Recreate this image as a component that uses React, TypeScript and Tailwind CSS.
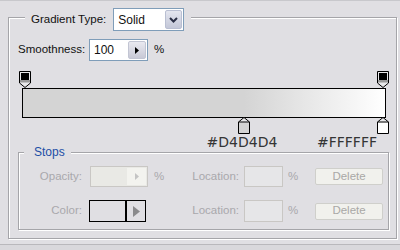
import * as React from "react";

type Stop = { pos: number; color: string; label?: string };

const opacityStops: Stop[] = [
    { pos: 0, color: "#000000" },
    { pos: 1, color: "#000000" },
];

const colorStops: Stop[] = [
    { pos: 0.612, color: "#d4d4d4", label: "#D4D4D4" },
    { pos: 1, color: "#ffffff", label: "#FFFFFF" },
];

// bar inner spans 358px, stop tip sits 2.5px in from the bar edge
function stopLeft(pos: number) {
    return Math.round(2.5 + pos * 358 - 6);
}

const etched = "border border-[#a5a5a9] shadow-[inset_1px_1px_0_#ffffff,1px_1px_0_#ffffff]";

function TopStop() {
    return (
        <svg width="12" height="17" viewBox="0 0 12 17">
            <path d="M0.5 0.5 H11.5 V12 L6 16.5 L0.5 12 Z" fill="#e8e8ea" stroke="#000" />
            <rect x="2" y="2" width="8" height="7" fill="#000" />
            <rect x="1" y="9" width="10" height="2.5" fill="#9a9a9a" />
        </svg>
    );
}

function BottomStop({ color }: { color: string }) {
    return (
        <svg width="12" height="17" viewBox="0 0 12 17">
            <path d="M6 0.5 L11.5 5 V16.5 H0.5 V5 Z" fill="#e8e8ea" stroke="#000" />
            <rect x="1" y="5.5" width="10" height="10.5" fill={color} />
            <path d="M0.5 5 H11.5" stroke="#000" />
        </svg>
    );
}

function SmallArrow({ fill }: { fill: string }) {
    return (
        <svg width="4" height="7" viewBox="0 0 4 7">
            <path d="M0 0 L4 3.5 L0 7 Z" fill={fill} />
        </svg>
    );
}

function GradientEditor() {
    return (
        <div className="relative ml-[13px] mt-[10px] h-[79px] w-[364px] pt-[17px]">
            <div className="h-[30px] border border-black bg-[linear-gradient(to_right,#d4d4d4_61%,#ffffff)]" />

            {opacityStops.map((s, i) => (
                <div key={"o" + i} className="absolute top-0 flex" style={{ left: stopLeft(s.pos) }}>
                    <TopStop />
                </div>
            ))}

            {colorStops.map((s, i) => (
                <div key={"c" + i} className="absolute top-[46px] flex" style={{ left: stopLeft(s.pos) }}>
                    <BottomStop color={s.color} />
                </div>
            ))}

            {/* hex readouts */}
            <div
                className="absolute top-[63px] w-[80px] text-center font-['DejaVu_Sans',sans-serif] text-[14px] leading-[16px] text-[#353535]"
                style={{ left: stopLeft(colorStops[0].pos) + 6 - 42 }}
            >
                {colorStops[0].label}
            </div>
            <div className="absolute right-[9px] top-[63px] font-['DejaVu_Sans',sans-serif] text-[14px] leading-[16px] text-[#353535]">
                {colorStops[1].label}
            </div>
        </div>
    );
}

function DisabledRowEnd() {
    return (
        <>
            <span className="w-[50px] text-right">Location:</span>
            <div className="ml-[5px] h-full w-[39px] border border-[#c9c7c4] bg-[#e6e6e8]" />
            <span className="ml-[5px]">%</span>
            <button
                type="button"
                disabled
                className="ml-auto flex h-[17px] w-[68px] items-center justify-center rounded-[2px] border border-[#cfcfcb] bg-[#f1f1ed] text-[#a9a8a6]"
            >
                Delete
            </button>
        </>
    );
}

export default function App() {
    return (
        <div className="relative flex h-[250px] w-[400px] flex-col overflow-hidden border-t border-[#c8c8cc] bg-[#e0dfe3] font-['Liberation_Sans',Arial,sans-serif] text-[11.5px] text-[#111]">
            {/* Main group box */}
            <div className={["ml-[8px] mt-[16px] box-border h-[222px] w-[389px] shrink-0", etched].join(" ")}>
                {/* Legend: Gradient Type */}
                <div className="ml-[16px] mt-[-10px] flex h-[23px] w-fit items-center bg-[#e0dfe3] pl-[6px] pr-[7px]">
                    <span>Gradient Type:</span>
                    <div className="ml-[7px] flex h-[23px] w-[71px] border border-[#7f9db9] bg-white p-[1px]">
                        <span className="flex flex-1 items-center pl-[3px] text-[12px]">Solid</span>
                        <span className="flex w-[17px] items-center justify-center rounded-[2px] border border-[#b9bfd2] bg-[linear-gradient(#e4e6ef,#c3c7d8)]">
                            <svg width="9" height="6" viewBox="0 0 9 6">
                                <path d="M1 1 L4.5 4.5 L8 1" fill="none" stroke="#2a2f45" strokeWidth="2" />
                            </svg>
                        </span>
                    </div>
                </div>

                {/* Smoothness */}
                <div className="mt-[8px] flex h-[22px] items-center pl-[9px]">
                    <span className="w-[71px]">Smoothness:</span>
                    <div className="flex h-[22px] w-[59px] border border-[#7f9db9] bg-white p-[1px]">
                        <span className="flex flex-1 items-center pl-[3px] text-[12px]">100</span>
                        <span className="flex w-[18px] items-center justify-center rounded-[2px] border border-[#c2c5d3] bg-[linear-gradient(#e9e9f0,#c8c9d6)]">
                            <SmallArrow fill="#000" />
                        </span>
                    </div>
                    <span className="ml-[6px]">%</span>
                </div>

                <GradientEditor />

                {/* Stops group */}
                <div className={["ml-[9px] mt-[2px] box-border h-[78px] w-[371px]", etched].join(" ")}>
                    <div className="ml-[5px] mt-[-8px] h-[14px] w-fit bg-[#e0dfe3] pl-[10px] pr-[6px] leading-[14px] text-[12px] text-[#1d4ea6]">
                        Stops
                    </div>

                    <div className="mt-[7px] flex h-[21px] items-center pr-[5px] text-[#a9a8ac]">
                        <div className="flex h-full w-[170px] items-center">
                            <span className="w-[63px] text-right">Opacity:</span>
                            <div className="ml-[8px] flex h-full w-[58px] border border-[#c9c7c4] bg-[#e9e9e5] p-[1px]">
                                <span className="flex-1" />
                                <span className="flex w-[19px] items-center justify-center bg-[#f3f3ef]">
                                    <SmallArrow fill="#c4c4c4" />
                                </span>
                            </div>
                            <span className="ml-[6px]">%</span>
                        </div>
                        <DisabledRowEnd />
                    </div>

                    <div className="mt-[13px] flex h-[22px] items-center pr-[5px] text-[#a9a8ac]">
                        <div className="flex h-full w-[170px] items-center">
                            <span className="w-[63px] text-right">Color:</span>
                            <div className="ml-[7px] flex h-full w-[57px] border border-black">
                                <span className="w-[37px] border-r-2 border-black" />
                                <span className="flex flex-1 items-center justify-center">
                                    <svg width="7" height="11" viewBox="0 0 7 11">
                                        <path d="M0 0 L7 5.5 L0 11 Z" fill="#8a8a8c" />
                                    </svg>
                                </span>
                            </div>
                        </div>
                        <DisabledRowEnd />
                    </div>
                </div>
            </div>

            {/* bottom strip */}
            <div className="mt-[5px] flex-1 border-t border-[#b9b8bc] bg-[#d9d8dc]" />
        </div>
    );
}
